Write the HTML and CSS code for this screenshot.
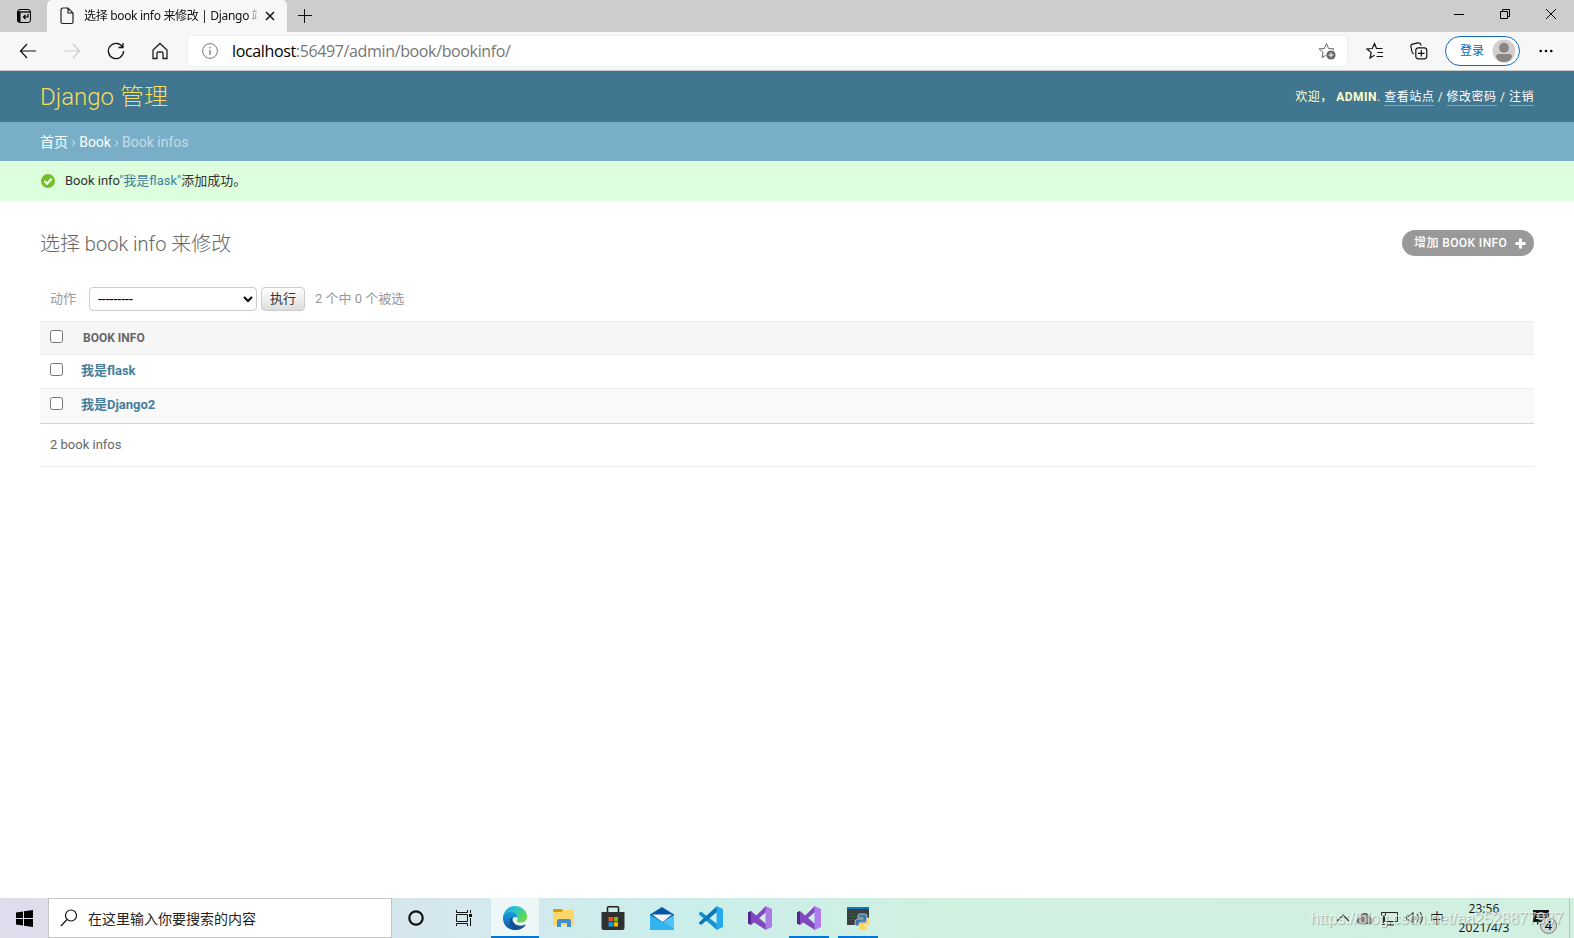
FILE: index.html
```html
<!DOCTYPE html>
<html lang="zh-CN">
<head>
<meta charset="utf-8">
<title>选择 book info 来修改 | Django 站点管理员</title>
<link rel="stylesheet" href="styles.css">
</head>
<body>
<header class="tabstrip">
  <div class="tab-actions"><svg width="16" height="16" viewBox="0 0 16 16" fill="none" stroke="#000"><rect x="1.500" y="1.500" width="13" height="13" rx="2.500"/><path d="M2 4h12" stroke-width="1.300"/><path d="M3 3.500v10.500" stroke-width="3"/><path d="M12 6v3H7.500M9.500 7l-2 2 2 2" stroke-width="1.200"/></svg></div>
  <div class="tab">
    <svg width="14" height="18" viewBox="0 0 14 18" fill="none" stroke="#222" stroke-width="1.200"><path d="M1 3.500Q1 1 3 1h5l5 5v9q0 1.500-1.500 1.500h-9Q1 16.500 1 15zM8 1v5h5"/></svg>
    <span class="tab-title">选择 book info 来修改 | Django 站</span>
    <svg class="tab-close" width="10" height="10" viewBox="0 0 10 10" stroke="#111" stroke-width="1.500"><path d="M1 1l8 8M9 1L1 9"/></svg>
  </div>
  <svg class="new-tab" width="16" height="16" viewBox="0 0 16 16" stroke="#111"><path d="M1 7.500h14M7.500 1v14"/></svg>
  <div class="window-controls">
    <svg width="12" height="12" viewBox="0 0 12 12" stroke="#000"><path d="M1 6.500h10"/></svg>
    <svg width="12" height="12" viewBox="0 0 12 12" stroke="#000" fill="none"><path d="M1.500 3.500h7v7h-7zM3.500 3.500v-2h7v7h-2"/></svg>
    <svg width="12" height="12" viewBox="0 0 12 12" stroke="#000"><path d="M1 1l10 10M11 1L1 11"/></svg>
  </div>
</header>
<nav class="toolbar">
  <svg class="nav-icon" width="18" height="18" viewBox="0 0 18 18" fill="none" stroke="#111" stroke-width="1.200"><path d="M17 9H1.500M8 2L1.500 9 8 16"/></svg>
  <svg class="nav-icon" width="18" height="18" viewBox="0 0 18 18" fill="none" stroke="#ccc" stroke-width="1.200"><path d="M1 9h15.500M10 2l6.500 7-6.500 7"/></svg>
  <svg class="nav-icon" width="18" height="18" viewBox="0 0 18 18" fill="none" stroke="#111" stroke-width="1.300"><path d="M15.500 5A7.600 7.600 0 1 0 16.600 9M16 1v4.500h-4.500"/></svg>
  <svg class="nav-icon" width="18" height="18" viewBox="0 0 18 18" fill="none" stroke="#222" stroke-width="1.300"><path d="M2 8l7-6.500L16 8v8.500h-4v-5q0-1.500-1.500-1.500h-3Q6 10 6 11.500v5H2z"/></svg>
  <div class="address">
    <svg width="16" height="16" viewBox="0 0 16 16" fill="none" stroke="#767676"><circle cx="8" cy="8" r="7.400"/><path d="M8 7v5M8 4v1.500" stroke-width="1.300"/></svg>
    <span class="url"><b>localhost</b>:56497/admin/book/bookinfo/</span>
    <svg class="star" width="18" height="18" viewBox="0 0 18 18"><path d="M8.500 1.500l2.100 5 5.400.4-4 3.500 1.200 5.100-4.700-2.600L4 15.500l1.100-5.300L1 6.900l5.400-.4z" fill="none" stroke="#666"/><circle cx="13" cy="13" r="5.500" fill="#fff"/><circle cx="13" cy="13" r="4.600" fill="#666"/><path d="M10.500 13h5M13 10.500v5" stroke="#fff"/></svg>
  </div>
  <svg class="favorites" width="18" height="18" viewBox="0 0 18 18" fill="none" stroke="#111" stroke-width="1.200"><path d="M16.500 6.500h-6L8.500 1.500l-2.200 5L1 7l4.200 3.600L4 16l4.500-2.700M11.500 10.500h5.500M10.500 14.500H17"/></svg>
  <svg class="collections" width="18" height="18" viewBox="0 0 18 18" fill="none" stroke="#111" stroke-width="1.200"><path d="M4 12Q2.300 11.500 2 10L.900 4.500Q.600 2.700 2.500 2.200L8 .900q2-.400 2.700 1.300l.4 1.300"/><rect x="5.800" y="5.800" width="11" height="11" rx="2.500"/><path d="M11.300 8v6.500M8 11.300h6.500"/></svg>
  <div class="login"><span>登录</span><svg width="24" height="24" viewBox="0 0 24 24"><circle cx="12" cy="12" r="11.500" fill="#d2d0ce"/><circle cx="12" cy="8.800" r="5" fill="#8a8683"/><path d="M4 17.500q0-2.500 3-2.500h10q3 0 3 2.500-1.500 5.500-8 5.500t-8-5.500" fill="#8a8683"/></svg></div>
  <svg class="more" width="14" height="4" viewBox="0 0 14 4"><circle cx="1.700" cy="2" r="1.300"/><circle cx="7" cy="2" r="1.300"/><circle cx="12.300" cy="2" r="1.300"/></svg>
</nav>
<section class="site-header">
  <h1>Django 管理</h1>
  <div class="user-tools">欢迎，&nbsp;<strong>ADMIN</strong>. <a>查看站点</a> / <a>修改密码</a> / <a>注销</a></div>
</section>
<div class="breadcrumbs"><a>首页</a> › <a>Book</a> › Book infos</div>
<div class="message">
  <svg width="14" height="14" viewBox="0 0 14 14"><circle cx="7" cy="7" r="7" fill="#70bf2b"/><path d="M3.500 7l2.500 2.700 4.700-4.900" fill="none" stroke="#fff" stroke-width="2.200"/></svg>
  <span>Book info<a>"我是flask"</a>添加成功。</span>
</div>
<main class="content">
  <div class="title-row">
    <h2>选择 book info 来修改</h2>
    <a class="add-button">增加 BOOK INFO<svg width="11" height="11" viewBox="0 0 11 11"><path d="M5.500.5v10M.5 5.500h10" stroke="#fff" stroke-width="3"/></svg></a>
  </div>
  <div class="actions">
    <label>动作</label>
    <select><option>---------</option></select>
    <button>执行</button>
    <span>2 个中 0 个被选</span>
  </div>
  <div class="row head"><input type="checkbox"><span>BOOK INFO</span></div>
  <div class="row"><input type="checkbox"><a>我是flask</a></div>
  <div class="row alt"><input type="checkbox"><a>我是Django2</a></div>
  <div class="paginator">2 book infos</div>
</main>
<footer class="taskbar">
  <div class="start"><svg width="17" height="17" viewBox="0 0 17 17"><path d="M0 2.500l7-1V8H0zM8 1.300L17 0v8H8zM0 9h7v6.500l-7-1zM8 9h9v8l-9-1.300z"/></svg></div>
  <div class="search"><svg width="18" height="18" viewBox="0 0 18 18" fill="none" stroke="#111" stroke-width="1.200"><circle cx="11" cy="6.500" r="5.500"/><path d="M7 10.500L1 17"/></svg><span>在这里输入你要搜索的内容</span></div>
  <div class="task"><svg width="16" height="16" viewBox="0 0 16 16"><circle cx="8" cy="8" r="6.700" fill="none" stroke="#111" stroke-width="2.200"/></svg></div>
  <div class="task"><svg width="16" height="16" viewBox="0 0 16 16" fill="none" stroke="#111"><path d="M.5 0v2.500h11V0M.5 16v-2.500h11V16M.5 4.500h11v7H.5zM14.500 0v3M14.500 8v8"/><path d="M13 4h3v3h-3z" fill="#111" stroke="none"/></svg></div>
  <div class="task active"><svg width="24" height="24" viewBox="0 0 24 24">
    <defs><linearGradient id="edge-green" x2="1" y2=".5"><stop stop-color="#229bd7"/><stop offset=".5" stop-color="#2bc5d2"/><stop offset="1" stop-color="#65d94a"/></linearGradient><linearGradient id="edge-blue" x2="0" y2="1"><stop stop-color="#1b9de2"/><stop offset="1" stop-color="#0b4ea2"/></linearGradient></defs>
    <path d="M0 11C1 4 6 0 12 0c7 0 12 5 12 10.500 0 4-3 6-6.500 6-3 0-4-1-3.500-2 2-3 0-7-4.500-7C5 7.500 1.500 9 0 11z" fill="url(#edge-green)"/>
    <path d="M0 12c0-4 4-6.500 8.500-6 4 .4 6.500 3.500 6 6.500-1-2-4-2-5 .5-1.500 4 3 9 8.500 7.500 2.300-.6 4-2 4.500-1.500C20 22.500 16 24 12 24 5 24 0 19 0 12z" fill="url(#edge-blue)"/>
    <path d="M9.500 10.500C5 14 6 21 12.500 24 18 24 21 21 22.500 19c.2-.7-.7-.4-1.300-.1C15 21.500 8 17 9.500 10.500z" fill="#124f93"/></svg></div>
  <div class="task"><svg width="22" height="20" viewBox="0 0 22 20"><path d="M0 2q0-1 1-1h8l1 2h11v14H0z" fill="#ffd05c"/><path d="M0 2q0-1 1-1h8l1 1.500L8 4H0z" fill="#d99a00"/><path d="M0 4h9l2-2h10v14H0z" fill="#ffd768"/><path d="M4 19v-6q0-2 2-2h10q2 0 2 2v6h-4v-4H8v4z" fill="#3f8fd8"/></svg></div>
  <div class="task"><svg width="24" height="24" viewBox="0 0 24 24"><path d="M6.500 7V1.800q0-1 1-1h9q1 0 1 1V7" fill="none" stroke="#222" stroke-width="1.600"/><path d="M.5 6h23v16q0 2-2 2h-19q-2 0-2-2z" fill="#303030"/><path d="M7.500 11h4.300v4.300H7.500z" fill="#f25022"/><path d="M12.700 11H17v4.300h-4.300z" fill="#7fba00"/><path d="M7.500 16.200h4.300v4.300H7.500z" fill="#00a4ef"/><path d="M12.700 16.200H17v4.300h-4.300z" fill="#ffb900"/></svg></div>
  <div class="task"><svg width="24" height="23" viewBox="0 0 24 23"><path d="M0 7.500L12 0l12 7.500V22q0 1-1 1H1q-1 0-1-1z" fill="#0759a8"/><path d="M2 7.500h20L12.500 15z" fill="#f5f5f5"/><path d="M0 8l12.500 7L24 22.500l-1 .5H1q-1 0-1-1z" fill="#32b4ee"/><path d="M24 8l-11.500 7L24 22.500z" fill="#4fc4f4"/></svg></div>
  <div class="task"><svg width="24" height="24" viewBox="0 0 24 24"><path d="M0 7l2-1.500 16 12.500v6L0 8.500z" fill="#1293d2"/><path d="M0 16.500L18 0v6L2 19l-2-1.500z" fill="#0877b9"/><path d="M17.500 0L24 3v18l-6.500 3z" fill="#29a9ed"/></svg></div>
  <div class="task"><svg width="24" height="24" viewBox="0 0 24 24"><path d="M0 6.500L3 5l15 13v6L3 14.500v3L0 18z" fill="#8148bd"/><path d="M0 6.500L3 5v14l-3-1.500z" fill="#54278f"/><path d="M3 19l15-13V0L3 14.500z" fill="#8047c2"/><path d="M17.500 0L24 3v18l-6.500 3z" fill="#ac79e9"/></svg></div>
  <div class="task running"><svg width="24" height="24" viewBox="0 0 24 24"><path d="M0 6.500L3 5l15 13v6L3 14.500v3L0 18z" fill="#8148bd"/><path d="M0 6.500L3 5v14l-3-1.500z" fill="#54278f"/><path d="M3 19l15-13V0L3 14.500z" fill="#8047c2"/><path d="M17.500 0L24 3v18l-6.500 3z" fill="#b27af0"/></svg></div>
  <div class="task running"><svg width="24" height="24" viewBox="0 0 24 24"><path d="M1 1h22v18H1z" fill="#3b3f40"/><path d="M1 1h22v2H1z" fill="#0d79bd"/><path d="M4 7.500h5M11 7.500h7M4 10.500h7M4 13.500h4" stroke="#286b37"/><path d="M14 8h5q2 0 2 2v4q0 2-2 2h-4q-2 0-2 2v2h-2q-2 0-2-3.500t2-3.500h6v-1h-5v-2q0-2 2-2z" fill="#3e78ad" stroke="#eee" stroke-width=".6"/><path d="M21 12h1q2 0 2 3.500T22 19h-5v1h4v2q0 2-2 2h-4q-2 0-2-2v-3q0-2 2-2h4q2 0 2-2z" fill="#ffd54e" stroke="#eee" stroke-width=".6"/></svg></div>
  <div class="tray">
    <svg width="12" height="8" viewBox="0 0 12 8" fill="none" stroke="#222" stroke-width="1.200"><path d="M0 7l6-6 6 6"/></svg>
    <svg width="16" height="12" viewBox="0 0 16 12"><path d="M3 11.500C-.5 11.500-.5 6.500 3 6 3.500 3.500 5 1.500 8 1.500S12 4 12.500 5.500c4 .5 4 6 0 6z" fill="#888" stroke="#333" stroke-width=".8"/></svg>
    <svg width="17" height="15" viewBox="0 0 17 15" fill="none" stroke="#222"><path d="M5 1.500h11.500v9H3.500V5M9.500 11v3M5 14h8M.5 1.500h4v3h-4zM2.500 5v9M1 13.500h3"/></svg>
    <svg width="17" height="14" viewBox="0 0 17 14" fill="none" stroke="#222"><path d="M.5 5h3L7 1.500v11L3.500 9h-3zM9 5q1.500 2 0 4M11.500 3q3 4 0 8M14 1q4.500 6 0 12"/></svg>
    <span class="ime">中</span>
  </div>
  <div class="clock"><span>23:56</span><span>2021/4/3</span></div>
  <div class="notify"><svg width="16" height="15" viewBox="0 0 16 15"><path d="M0 0h16v12H7l-3 3v-3H0z" fill="#111"/><path d="M3 3.500h10M3 6h10M3 8.500h7" stroke="#d2efe2"/></svg><span class="badge">4</span></div>
  <div class="watermark">https://blog.csdn.net/aa2528877987</div>
</footer>
</body>
</html>
```
FILE: styles.css
```css
* { box-sizing: border-box; }
body { margin: 0; height: 938px; overflow: hidden; display: flex; flex-direction: column; background: #fff; color: #333; font: 13px/16px Roboto, "Noto Sans CJK SC", sans-serif; }
svg { display: block; flex: none; }
h1, h2 { margin: 0; font-weight: 300; }

.tabstrip { height: 32px; flex: none; display: flex; align-items: center; background: #cdcdcd; font: 12px/16px "Noto Sans", "Noto Sans CJK SC", sans-serif; }
.tab-actions { width: 47px; padding-left: 16px; }
.tab { width: 240px; height: 32px; padding: 0 12px 0 13px; display: flex; align-items: center; background: #f7f7f7; border-radius: 5px 5px 0 0; color: #111; }
.tab-title { width: 175px; margin-left: 10px; overflow: hidden; white-space: nowrap; letter-spacing: -.32px; -webkit-mask-image: linear-gradient(to right, #000 163px, transparent 177px); }
.tab-close { margin-left: 8px; }
.new-tab { margin-left: 10px; }
.window-controls { margin-left: auto; margin-top: -4px; padding-right: 17px; display: flex; gap: 34px; }

.toolbar { height: 39px; flex: none; display: flex; align-items: center; padding-left: 19px; background: #f7f7f7; border-bottom: 1px solid #c8cbcc; }
.nav-icon { margin-right: 26px; }
.address { width: 1159px; height: 30px; margin-left: -7px; margin-right: 19px; padding: 0 11px 0 14px; display: flex; align-items: center; background: #fff; border-radius: 4px; box-shadow: 0 0 2px #ddd; }
.url { margin-left: 14px; color: #767676; font: 16px/22px "Open Sans", sans-serif; letter-spacing: -.36px; }
.url b { color: #000; font-weight: 400; }
.star { margin-left: auto; }
.collections { margin-left: 26px; }
.login { width: 75px; height: 30px; margin-left: 17px; padding: 0 3px 0 14px; display: flex; align-items: center; justify-content: space-between; border: 1px solid #0f6cbd; border-radius: 15px; background: #fff; color: #0067b8; font-size: 12px; }
.more { margin-left: 19px; }

.site-header { height: 51px; flex: none; padding: 0 40px; display: flex; align-items: center; justify-content: space-between; background: #417690; color: #ffc; }
.site-header h1 { color: #f5dd5d; font-size: 24px; line-height: 30px; padding-top: 1px; }
.user-tools { padding-top: 2px; font-size: 12px; line-height: 15px; letter-spacing: .5px; }
.user-tools strong { font-weight: 700; }
.user-tools a { display: inline-block; height: 16px; color: #fff; border-bottom: 1px solid rgba(255,255,255,.35); }
.breadcrumbs { height: 39px; flex: none; padding: 0 40px; line-height: 41px; font-size: 14px; background: #79aec8; color: #c4dce8; }
.breadcrumbs a { color: #fff; }
.message { height: 40px; flex: none; display: flex; align-items: center; gap: 10px; padding: 0 41px; background: #dfd; }
.message span { margin-top: -1px; }
.message a { color: #447e9b; }

.content { flex: 1; padding: 29px 40px 0; color: #666; }
.title-row { height: 26px; display: flex; justify-content: space-between; }
.title-row h2 { font-size: 20px; line-height: 29px; }
.add-button { width: 132px; height: 26px; padding: 0 8px 0 12px; display: flex; align-items: center; justify-content: space-between; border-radius: 15px; background: #999; color: #fff; font-size: 12px; font-weight: 500; letter-spacing: .4px; }
.actions { height: 65px; padding: 20px 10px 0; display: flex; align-items: center; color: #999; }
.actions label { width: 39px; }
.actions select { width: 168px; height: 24px; margin: 0; padding: 0 0 0 4px; border: 1px solid #ccc; border-radius: 4px; background: #fff; color: #000; font: 14px Roboto, sans-serif; }
.actions button { width: 44px; height: 24px; margin: 0 10px 0 4px; padding: 0 0 1px; border: 1px solid #ccc; border-radius: 4px; background: linear-gradient(#fff, #ddd); color: #333; font: 13px/20px "Noto Sans CJK SC", sans-serif; }
.row { height: 34px; padding: 0 10px 2px; display: flex; align-items: center; border-bottom: 1px solid #eee; }
.row input { width: 13px; height: 13px; margin: -3px 18px 0 0; }
.row a { color: #447e9b; font-weight: 700; }
.head { padding-bottom: 0; border-top: 1px solid #eee; background: #f6f6f6; font-size: 12px; font-weight: 700; }
.head span { margin-left: 2px; }
.alt { height: 35px; background: #f9f9f9; border-bottom: 1px solid #d5d5d5; }
.paginator { height: 43px; padding: 0 10px; line-height: 42px; border-bottom: 1px solid #eee; }

.taskbar { position: relative; height: 40px; flex: none; display: flex; align-items: stretch; background: linear-gradient(90deg, #dfdcec 0, #d4e8ee 30%, #caeeeb 43%, #d0f0e0 60%, #d2efe0 100%); color: #222; font-size: 12px; }
.start { width: 48px; display: flex; align-items: center; justify-content: center; }
.search { width: 344px; display: flex; align-items: center; gap: 10px; padding-left: 11px; background: #fff; border: 1px solid #c6c6c6; font: 14px "Noto Sans CJK SC", sans-serif; }
.task { width: 49px; display: flex; align-items: center; justify-content: center; }
.task:nth-child(3) { width: 48px; }
.task:nth-child(4) { width: 47px; }
.task.active { width: 48px; margin-left: 4px; padding-top: 2px; background: #edf7f8; border-bottom: 2px solid #0078d7; }
.task.running { width: 40px; margin-left: 5px; margin-right: 4px; padding-top: 2px; border-bottom: 2px solid #0078d7; }
.tray { margin-left: auto; display: flex; align-items: center; gap: 8px; }
.ime { font: 14px/20px "Noto Sans CJK SC", sans-serif; margin-left: -1px; margin-top: -2px; }
.clock { width: 80px; display: flex; flex-direction: column; align-items: center; padding-top: 1px; line-height: 19px; font-family: "Open Sans", sans-serif; color: #111; letter-spacing: .1px; }
.notify { width: 46px; position: relative; padding: 12px 0 0 9px; margin-right: 4px; border-right: 1px solid #aac9bd; }
.badge { position: absolute; left: 16px; top: 19px; width: 17px; height: 17px; border: 1px solid #777; border-radius: 50%; background: #d0d6d3; text-align: center; line-height: 15px; font-size: 13px; color: #000; }
.watermark { position: absolute; right: 11px; top: 11px; font: 16px/20px "Liberation Sans", sans-serif; letter-spacing: -.06px; color: rgba(255,255,255,.65); text-shadow: 1px 1px 1px rgba(90,110,100,.45); }
```
